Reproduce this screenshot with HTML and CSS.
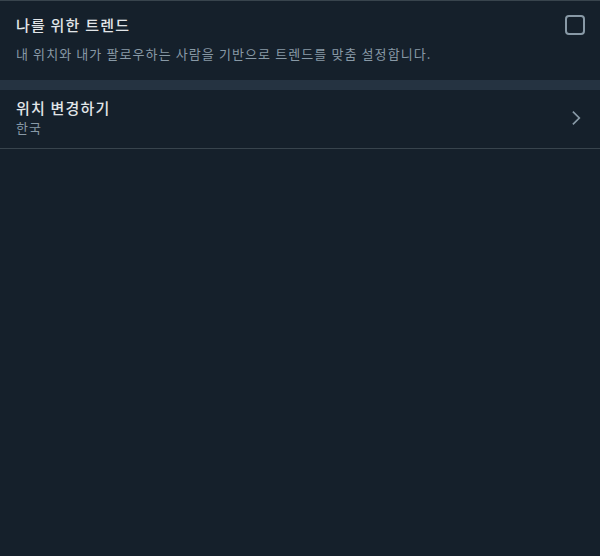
FILE: index.html
```html
<!DOCTYPE html>
<html>
<head>
  <meta charset="UTF-8">
  <title>트렌드 설정</title>
  <link rel="stylesheet" href="styles.css">
</head>
<body>
  <div class="settings">
    <div class="setting-block">
      <div class="setting-head">
        <span class="setting-title">나를 위한 트렌드</span>
        <span class="checkbox"></span>
      </div>
      <p class="setting-desc">내 위치와 내가 팔로우하는 사람을 기반으로 트렌드를 맞춤 설정합니다.</p>
    </div>

    <div class="spacer"></div>

    <div class="link-row">
      <div class="link-text">
        <div class="setting-title">위치 변경하기</div>
        <div class="link-sub">한국</div>
      </div>
      <svg class="chevron" viewBox="0 0 24 24" width="20" height="20">
        <path d="M14.586 12L7.543 4.96l1.414-1.42L17.414 12l-8.457 8.46-1.414-1.42L14.586 12z" fill="#8899a6"></path>
      </svg>
    </div>
  </div>
</body>
</html>
```

FILE: styles.css
```css
body {
  margin: 0;
  background-color: #15202b;
  font-family: "Noto Sans CJK KR", "Noto Sans", sans-serif;
  color: #d9d9d9;
}

.settings {
  border-top: 1px solid #38444d;
}

.setting-block {
  padding: 14px 16px 17px 16px;
}

.setting-head {
  display: flex;
  justify-content: space-between;
  align-items: center;
}

.setting-title {
  font-size: 15px;
  font-weight: 500;
  line-height: 20px;
  letter-spacing: 1.2px;
  color: #e1e5e8;
}

.checkbox {
  width: 16px;
  height: 16px;
  border: 2px solid #8899a6;
  border-radius: 4px;
  margin-right: -1px;
}

.setting-desc {
  margin: 10px 0 0 0;
  font-size: 13px;
  line-height: 18px;
  letter-spacing: 1.1px;
  color: #8899a6;
}

.spacer {
  height: 10px;
  background-color: #253341;
}

.link-row {
  display: flex;
  justify-content: space-between;
  align-items: center;
  padding: 8px 16px 11px 16px;
  border-bottom: 1px solid #38444d;
}

.link-sub {
  margin-top: 1px;
  font-size: 13px;
  line-height: 18px;
  letter-spacing: 1.1px;
  color: #8899a6;
}

.chevron {
  display: block;
  margin-right: -2px;
}
```
